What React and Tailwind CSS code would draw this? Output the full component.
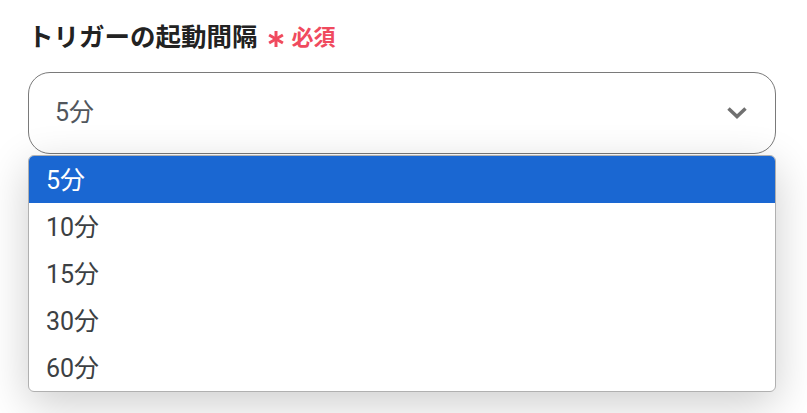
import React from "react";

const items = ["5分", "10分", "15分", "30分", "60分"];

export default function App() {
  return (
    <div
      className="w-[807px] h-[413px] bg-white overflow-hidden pl-[28px] pr-[31px] pt-[20px]"
      style={{ fontFamily: 'Roboto, "Noto Sans CJK JP", sans-serif' }}
    >
      <div className="flex items-center h-[36px]">
        <span className="text-[25.5px] font-bold text-[#222] leading-none">
          トリガーの起動間隔
        </span>
        <svg className="ml-[9px] mt-[2px]" width="18" height="18" viewBox="0 0 18 18">
          <g stroke="#f04a5e" strokeWidth="3" strokeLinecap="butt">
            <line x1="9" y1="1" x2="9" y2="17" />
            <line x1="2.1" y1="5" x2="15.9" y2="13" />
            <line x1="2.1" y1="13" x2="15.9" y2="5" />
          </g>
        </svg>
        <span className="ml-[7px] text-[22px] font-bold text-[#f04a5e] leading-none">必須</span>
      </div>

      <div className="relative mt-[16px]">
        <div className="h-[82px] rounded-[22px] border border-[#7a7a7a] flex items-center justify-between pl-[26px] pr-[27px]">
          <span className="text-[25px] text-[#51565c]">5分</span>
          <svg width="22" height="14" viewBox="0 0 22 14">
            <path d="M2.5 2.5 L11 10.5 L19.5 2.5" fill="none" stroke="#707070" strokeWidth="3.5" />
          </svg>
        </div>

        <div className="mt-[128px] h-[54px] rounded-[10px] border border-[#b0b4bb]" />

        <div className="absolute left-0 right-0 top-[83px] bg-white rounded-[6px] border border-[#b0b0b0] overflow-hidden shadow-[0_12px_44px_rgba(0,0,0,0.2)]">
          {items.map((t, i) => (
            <div
              key={t}
              className={
                i === 0
                  ? "h-[47px] flex items-center pl-[17px] pt-[2px] bg-[#1a67d2] text-white text-[25px]"
                  : "h-[47px] flex items-center pl-[17px] pt-[3px] text-[#3c4043] text-[25px]"
              }
            >
              {t}
            </div>
          ))}
        </div>
      </div>
    </div>
  );
}
